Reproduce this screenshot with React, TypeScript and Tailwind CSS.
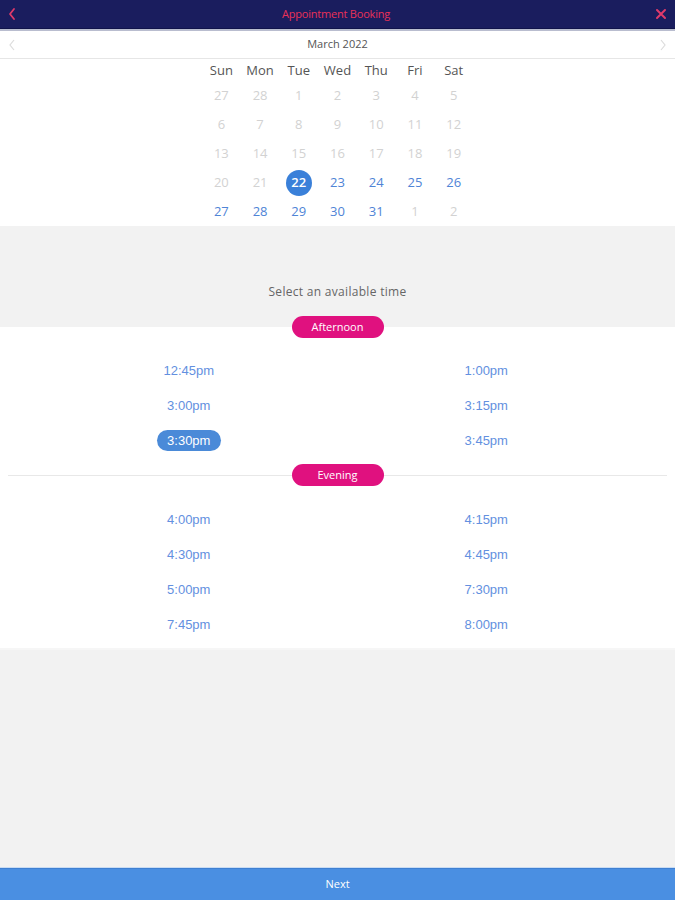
import React from "react";

const weekdays = ["Sun", "Mon", "Tue", "Wed", "Thu", "Fri", "Sat"];
const weeks: { d: number; active: boolean }[][] = [
  [27, 28, 1, 2, 3, 4, 5].map((d) => ({ d, active: false })),
  [6, 7, 8, 9, 10, 11, 12].map((d) => ({ d, active: false })),
  [13, 14, 15, 16, 17, 18, 19].map((d) => ({ d, active: false })),
  [20, 21, 22, 23, 24, 25, 26].map((d, i) => ({ d, active: i >= 2 })),
  [27, 28, 29, 30, 31, 1, 2].map((d, i) => ({ d, active: i <= 4 })),
];

const afternoon = ["12:45pm", "1:00pm", "3:00pm", "3:15pm", "3:30pm", "3:45pm"];
const evening = ["4:00pm", "4:15pm", "4:30pm", "4:45pm", "5:00pm", "7:30pm", "7:45pm", "8:00pm"];

function TimeGrid({ times, selected }: { times: string[]; selected?: string }) {
  return (
    <div className="grid grid-cols-2 px-[40px]">
      {times.map((t) => (
        <div key={t} className="h-[35px] flex items-center justify-center">
          {t === selected ? (
            <span className="h-[21px] w-[64px] rounded-full bg-[#4a8ad8] text-white flex items-center justify-center text-[13px]">
              {t}
            </span>
          ) : (
            <span className="text-[13px] text-[#6390e0]">{t}</span>
          )}
        </div>
      ))}
    </div>
  );
}

function Pill({ label }: { label: string }) {
  return (
    <span
      className="h-[22px] w-[92px] rounded-full bg-[#e0117f] text-white text-[11px] flex items-center justify-center shrink-0"
      style={{ fontFamily: "'Open Sans', sans-serif" }}
    >
      {label}
    </span>
  );
}

export default function App() {
  return (
    <div
      className="w-[675px] h-[900px] flex flex-col bg-[#f2f2f2] overflow-hidden"
      style={{ fontFamily: "'Liberation Sans', Arial, sans-serif" }}
    >
      {/* Header */}
      <div className="shrink-0">
        <div className="h-[28px] bg-[#1a1d5e] flex items-center justify-between px-[6px]">
          <svg width="10" height="14" viewBox="0 0 10 14" className="ml-[1px]">
            <path d="M7 2 L3 7 L7 12" fill="none" stroke="#e03a6a" strokeWidth="1.8" strokeLinecap="round" strokeLinejoin="round" />
          </svg>
          <span
            className="text-[11px] text-[#ea3158] tracking-[-0.2px]"
            style={{ fontFamily: "'Open Sans', sans-serif" }}
          >
            Appointment Booking
          </span>
          <svg width="12" height="12" viewBox="0 0 12 12" className="mr-[2px]">
            <path d="M2 2 L10 10 M10 2 L2 10" stroke="#e03a6a" strokeWidth="2" strokeLinecap="round" />
          </svg>
        </div>
        <div className="h-[1px] bg-[#10134a]" />
        <div className="h-[2px] bg-[#b9bdcf]" />
      </div>

      {/* Calendar */}
      <div className="bg-white shrink-0" style={{ fontFamily: "'Open Sans', sans-serif" }}>
        <div className="h-[28px] flex items-center justify-between px-[8px] border-b border-[#e6e6e6]">
          <svg width="8" height="12" viewBox="0 0 8 12">
            <path d="M6 1 L2 6 L6 11" fill="none" stroke="#dcdcdc" strokeWidth="1.2" />
          </svg>
          <span className="text-[11px] text-[#555]">March 2022</span>
          <svg width="8" height="12" viewBox="0 0 8 12">
            <path d="M2 1 L6 6 L2 11" fill="none" stroke="#dcdcdc" strokeWidth="1.2" />
          </svg>
        </div>
        <div className="w-[271px] mx-auto">
          <div className="grid grid-cols-7 h-[22px] pt-[2px] items-center">
            {weekdays.map((w) => (
              <div key={w} className="text-center text-[13px] text-[#555]">
                {w}
              </div>
            ))}
          </div>
          {weeks.map((row, ri) => (
            <div key={ri} className="grid grid-cols-7 h-[29px] items-center">
              {row.map((c, ci) => (
                <div key={ci} className="flex items-center justify-center">
                  {c.d === 22 && ri === 3 ? (
                    <span className="w-[26px] h-[26px] rounded-full bg-[#3a80d9] text-white text-[13px] font-semibold flex items-center justify-center">
                      22
                    </span>
                  ) : (
                    <span className={"text-[13px] " + (c.active ? "text-[#4f84d6]" : "text-[#d2d2d2]")}>
                      {c.d}
                    </span>
                  )}
                </div>
              ))}
            </div>
          ))}
        </div>
      </div>

      {/* Prompt */}
      <div className="h-[90px] shrink-0 flex items-end justify-center pb-[15px]">
        <span className="text-[12px] text-[#666] tracking-[0.3px]" style={{ fontFamily: "'Open Sans', sans-serif" }}>
          Select an available time
        </span>
      </div>

      {/* Times */}
      <div className="shrink-0">
        <div className="h-[22px] flex justify-center bg-[linear-gradient(to_bottom,#f2f2f2_50%,#ffffff_50%)]">
          <Pill label="Afternoon" />
        </div>
        <div className="bg-white pt-[15px] pb-[6px]">
          <TimeGrid times={afternoon} selected="3:30pm" />
          <div className="h-[22px] mt-[6px] flex items-center px-[8px]">
            <div className="flex-1 h-[1px] bg-[#e8e8e8]" />
            <Pill label="Evening" />
            <div className="flex-1 h-[1px] bg-[#e8e8e8]" />
          </div>
          <div className="pt-[16px]">
            <TimeGrid times={evening} />
          </div>
        </div>
        <div className="h-[2px] bg-[#f6f6f6]" />
      </div>

      <div className="flex-1" />

      {/* Next */}
      <div className="shrink-0">
        <div className="h-[1px] bg-[#c9dcf3]" />
        <div className="h-[32px] bg-[#4a8fe2] border-t border-[#3f80d2] flex items-center justify-center">
          <span className="text-[11px] text-white" style={{ fontFamily: "'Open Sans', sans-serif" }}>
            Next
          </span>
        </div>
      </div>
    </div>
  );
}
